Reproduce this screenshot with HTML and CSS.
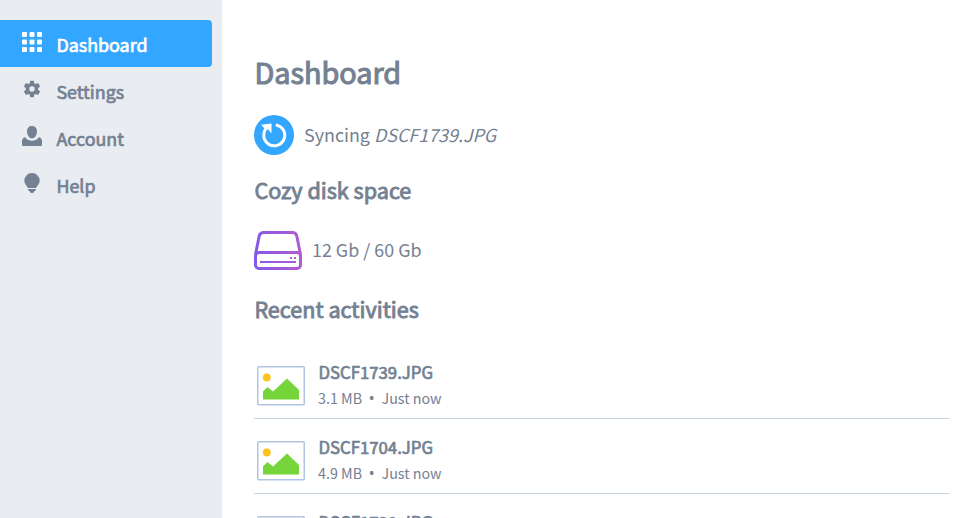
FILE: index.html
```html
<!DOCTYPE html>
<html lang="en">
<head>
<meta charset="utf-8">
<title>Dashboard</title>
<link rel="stylesheet" href="styles.css">
</head>
<body>
<div class="app">
  <nav class="sidebar">
    <a class="tab active"><svg class="icon" viewBox="0 0 20 20"><g fill="currentColor"><rect width="5" height="5" rx="1"/><rect x="7.5" width="5" height="5" rx="1"/><rect x="15" width="5" height="5" rx="1"/><rect y="7.5" width="5" height="5" rx="1"/><rect x="7.5" y="7.5" width="5" height="5" rx="1"/><rect x="15" y="7.5" width="5" height="5" rx="1"/><rect y="15" width="5" height="5" rx="1"/><rect x="7.5" y="15" width="5" height="5" rx="1"/><rect x="15" y="15" width="5" height="5" rx="1"/></g></svg><span>Dashboard</span></a>
    <a class="tab"><svg class="icon" viewBox="0 0 20 20"><path transform="translate(0 .5)" fill="currentColor" fill-rule="evenodd" d="M8.200 1.200h3.600l.5 2.500 1.400.8 2.400-.9 2 3.300-1.900 1.700v1.800l1.900 1.700-2 3.300-2.400-.9-1.400.8-.5 2.500H8.200l-.5-2.500-1.400-.8-2.400.9-2-3.300L3.800 10.400V8.600L1.900 6.900l2-3.300 2.400.9 1.400-.8zM10 6.800a2.700 2.700 0 1 0 0 5.400 2.700 2.700 0 0 0 0-5.400z"/></svg><span>Settings</span></a>
    <a class="tab"><svg class="icon" viewBox="0 0 20 20"><path fill="currentColor" d="M10 0c3 0 5 2.200 5 5.500S12.600 12.500 10 12.500 5 9 5 5.500 7 0 10 0zM3 11c1.500 2.500 4 3.800 7 3.800s5.500-1.300 7-3.800c2 .8 3 2.500 3 4.500V19a1 1 0 0 1-1 1H1a1 1 0 0 1-1-1v-3.500C0 13.500 1 11.800 3 11z"/></svg><span>Account</span></a>
    <a class="tab"><svg class="icon" viewBox="0 0 20 20"><path fill="currentColor" d="M10 0a7.600 7.600 0 0 1 7.700 7.600c0 3.200-2.200 4.900-3.700 7.400H6C4.500 12.500 2.300 10.800 2.300 7.600A7.600 7.600 0 0 1 10 0zM6 16h8v.5c0 .8-.5 1.200-1.500 1.500-.5 1.500-1.200 2-2.500 2s-2-.5-2.500-2C6.500 17.700 6 17.300 6 16.500z"/></svg><span>Help</span></a>
  </nav>
  <main class="content">
    <h1>Dashboard</h1>
    <p class="status"><svg width="40" height="40" viewBox="0 0 40 40"><circle cx="20" cy="20" r="20" fill="#33a6ff"/><path d="M21.800 9.900A10.500 10.500 0 1 1 13.200 12.500" fill="none" stroke="#fff" stroke-width="3"/><path d="M7.200 9.800l10.300-1.300v10l-3.600-4.200-3.200-.6z" fill="#fff"/></svg><span>Syncing <em>DSCF1739.JPG</em></span></p>
    <h2>Cozy disk space</h2>
    <p class="disk"><svg width="48" height="40" viewBox="0 0 48 40"><defs><linearGradient id="disk" gradientUnits="userSpaceOnUse" x1="0" y1="0" x2="48" y2="0"><stop offset="0" stop-color="#845ae8"/><stop offset="1" stop-color="#b25bd0"/></linearGradient></defs><g fill="none" stroke="url(#disk)" stroke-width="3"><path d="M1.500 24.500L5.200 6Q6.100 2.500 9.700 2.500H38.300Q41.900 2.500 42.800 6L46.500 24.500"/><rect x="1.500" y="22.500" width="45" height="16" rx="3.500"/></g><path fill="url(#disk)" d="M6 31h36v2H6zM36 27h2v2h-2zM40 27h2v2h-2z"/></svg><span>12 Gb / 60 Gb</span></p>
    <h2>Recent activities</h2>
    <ul class="files">
      <li><svg class="thumb" viewBox="0 0 48 40"><rect x=".75" y=".75" width="46.500" height="38" rx="1" fill="#fff" stroke="#b0c6e0" stroke-width="1.500"/><circle cx="9.800" cy="11.500" r="3.900" fill="#ffc21a"/><path d="M6 33.500V25.500l4.500-4.500 5.500 4.500L30 12.500l12 11.500v9.500z" fill="#76d53a"/></svg><div><h3>DSCF1739.JPG</h3><p class="meta">3.1 MB<i>•</i>Just now</p></div></li>
      <li><svg class="thumb" viewBox="0 0 48 40"><rect x=".75" y=".75" width="46.500" height="38" rx="1" fill="#fff" stroke="#b0c6e0" stroke-width="1.500"/><circle cx="9.800" cy="11.500" r="3.900" fill="#ffc21a"/><path d="M6 33.500V25.500l4.500-4.500 5.500 4.500L30 12.500l12 11.500v9.500z" fill="#76d53a"/></svg><div><h3>DSCF1704.JPG</h3><p class="meta">4.9 MB<i>•</i>Just now</p></div></li>
      <li><svg class="thumb" viewBox="0 0 48 40"><rect x=".75" y=".75" width="46.500" height="38" rx="1" fill="#fff" stroke="#b0c6e0" stroke-width="1.500"/><circle cx="9.800" cy="11.500" r="3.900" fill="#ffc21a"/><path d="M6 33.500V25.500l4.500-4.500 5.500 4.500L30 12.500l12 11.500v9.500z" fill="#76d53a"/></svg><div><h3>DSCF1720.JPG</h3></div></li>
    </ul>
  </main>
</div>
</body>
</html>
```

FILE: styles.css
```css
* { box-sizing: border-box; margin: 0; padding: 0; }
body {
  height: 518px;
  overflow: hidden;
  background: #fff;
  color: #748192;
  font: 17.9px/24px "Noto Sans CJK SC", sans-serif;
}
svg { display: block; flex: none; }
.app { display: flex; height: 518px; }
.sidebar { width: 222px; flex: none; padding: 20px 10px 0 0; background: #e9edf2; }
.tab {
  display: flex;
  height: 47px;
  padding: 12px 0 0 22px;
  gap: 14.4px;
  border-radius: 0 4px 4px 0;
  line-height: 24px;
  -webkit-text-stroke: 0.7px currentColor;
}
.tab.active { background: #33a6ff; color: #fff; }
.icon { width: 20px; height: 20px; }
.content { flex: 1; height: 518px; overflow: hidden; padding: 52px 31px 0 32px; }
h1, h2, h3 { font-weight: 400; }
h1 { height: 63px; padding-left: 0.5px; font-size: 28.800px; line-height: 39px; -webkit-text-stroke: 1.1px currentColor; }
.status, .disk { display: flex; align-items: center; gap: 10px; height: 40px; }
.status span, .disk span { padding-bottom: 2px; }
h2 { padding-left: 0.4px; font-size: 21.600px; line-height: 28px; -webkit-text-stroke: 0.9px currentColor; }
.status + h2 { margin: 21px 0 26px; }
.disk + h2 { margin: 25px 0 21px; }
.files { list-style: none; }
.files li { display: flex; gap: 13px; height: 75px; padding: 16px 0 0 3px; border-bottom: 1px solid #c5d3e0; }
.thumb { width: 48px; height: 40px; margin-top: 6px; }
h3 { padding-left: 0.4px; font-size: 16.800px; line-height: 25px; -webkit-text-stroke: 0.7px currentColor; }
.meta { font-size: 14.300px; line-height: 26px; }
.meta i { margin: 0 6.8px; font-family: "Noto Sans", sans-serif; font-size: 15.500px; line-height: 1; font-style: normal; }
```
